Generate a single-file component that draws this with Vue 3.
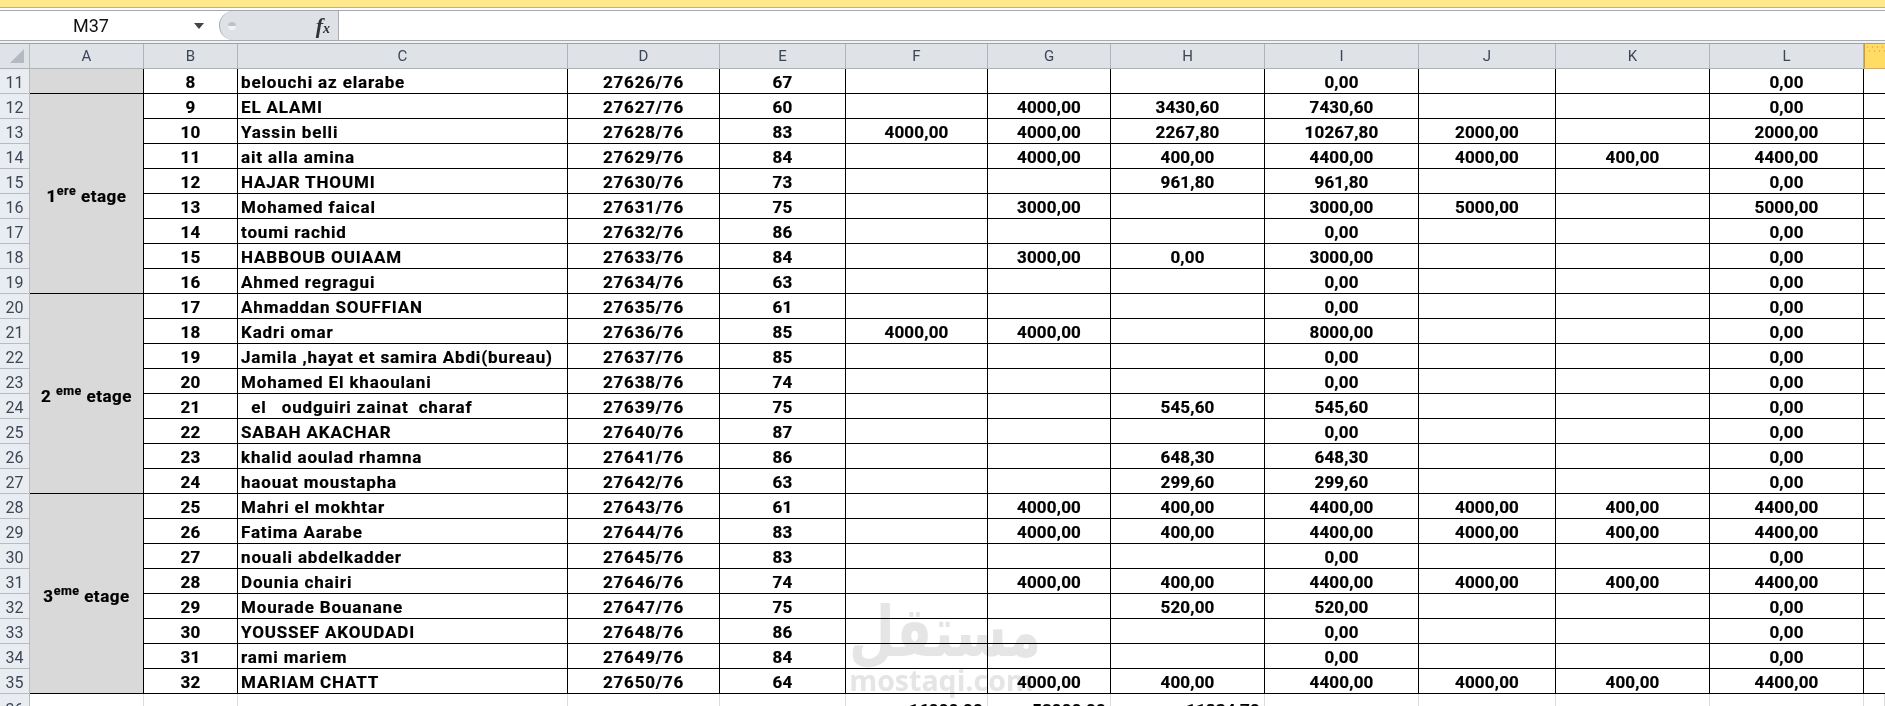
<script setup>
const columns = ['A','B','C','D','E','F','G','H','I','J','K','L']
const widths = [30,114,94,330,152,126,142,123,154,154,137,154,154,21]
const full = ['', '4000,00','400,00','4400,00','4000,00','400,00','4400,00']
const rows = [
  [8,'belouchi az elarabe','27626/76','67','','','','0,00','','','0,00'],
  [9,'EL ALAMI','27627/76','60','','4000,00','3430,60','7430,60','','','0,00'],
  [10,'Yassin belli','27628/76','83','4000,00','4000,00','2267,80','10267,80','2000,00','','2000,00'],
  [11,'ait alla amina','27629/76','84',...full],
  [12,'HAJAR THOUMI','27630/76','73','','','961,80','961,80','','','0,00'],
  [13,'Mohamed faical','27631/76','75','','3000,00','','3000,00','5000,00','','5000,00'],
  [14,'toumi rachid','27632/76','86','','','','0,00','','','0,00'],
  [15,'HABBOUB OUIAAM','27633/76','84','','3000,00','0,00','3000,00','','','0,00'],
  [16,'Ahmed regragui','27634/76','63','','','','0,00','','','0,00'],
  [17,'Ahmaddan SOUFFIAN','27635/76','61','','','','0,00','','','0,00'],
  [18,'Kadri omar','27636/76','85','4000,00','4000,00','','8000,00','','','0,00'],
  [19,'Jamila ,hayat et samira Abdi(bureau)','27637/76','85','','','','0,00','','','0,00'],
  [20,'Mohamed El khaoulani','27638/76','74','','','','0,00','','','0,00'],
  [21,'  el   oudguiri zainat  charaf','27639/76','75','','','545,60','545,60','','','0,00'],
  [22,'SABAH AKACHAR','27640/76','87','','','','0,00','','','0,00'],
  [23,'khalid aoulad rhamna','27641/76','86','','','648,30','648,30','','','0,00'],
  [24,'haouat moustapha','27642/76','63','','','299,60','299,60','','','0,00'],
  [25,'Mahri el mokhtar','27643/76','61',...full],
  [26,'Fatima Aarabe','27644/76','83',...full],
  [27,'nouali abdelkadder','27645/76','83','','','','0,00','','','0,00'],
  [28,'Dounia chairi','27646/76','74',...full],
  [29,'Mourade Bouanane','27647/76','75','','','520,00','520,00','','','0,00'],
  [30,'YOUSSEF AKOUDADI','27648/76','86','','','','0,00','','','0,00'],
  [31,'rami mariem','27649/76','84','','','','0,00','','','0,00'],
  [32,'MARIAM CHATT','27650/76','64',...full],
].map((cells, i) => ({ label: i + 11, cells }))
const groups = {
  11: { span: 1, num: '', sup: '', after: '' },
  12: { span: 8, num: '1', sup: 'ere', after: ' etage' },
  20: { span: 8, num: '2 ', sup: 'eme', after: ' etage' },
  28: { span: 8, num: '3', sup: 'eme', after: ' etage' },
}
const totals = { F: '16000,00', G: '52000,00', H: '11834,70' }
</script>

<template>
  <div class="sheet">
    <div class="ribbon-edge"></div>
    <div class="formula-bar">
      <div class="name-box">
        <span class="cell-ref">M37</span>
        <svg class="caret" width="10" height="6" viewBox="0 0 10 6"><path d="M0 0h10L5 6z" fill="#444"/></svg>
      </div>
      <div class="fx-zone">
        <span class="dot"></span>
        <span class="fx">f<i>x</i></span>
      </div>
      <div class="formula-input"></div>
    </div>
    <div class="formula-gap"></div>
    <div class="grid-wrap">
      <table class="grid">
        <colgroup>
          <col v-for="(w, i) in widths" :key="i" :style="{ width: w + 'px' }" />
        </colgroup>
        <thead>
          <tr>
            <th class="corner"><span class="corner-mark"></span></th>
            <th v-for="c in columns" :key="c" class="col-head">{{ c }}</th>
            <th class="col-head selected"></th>
          </tr>
        </thead>
        <tbody>
          <tr v-for="row in rows" :key="row.label">
            <th class="row-head">{{ row.label }}</th>
            <td v-if="groups[row.label]" :rowspan="groups[row.label].span" class="floor">
              <template v-if="groups[row.label].num">{{ groups[row.label].num }}<sup>{{ groups[row.label].sup }}</sup>{{ groups[row.label].after }}</template>
            </td>
            <td class="cell center">{{ row.cells[0] }}</td>
            <td class="cell name">{{ row.cells[1] }}</td>
            <td class="cell center code">{{ row.cells[2] }}</td>
            <td v-for="n in 8" :key="n" class="cell center">{{ row.cells[n + 2] }}</td>
            <td class="cell open"></td>
          </tr>
          <tr class="tail">
            <th class="row-head">36</th>
            <td class="plain"></td>
            <td class="plain"></td>
            <td class="plain"></td>
            <td class="plain"></td>
            <td class="plain"></td>
            <td class="plain total">{{ totals.F }}</td>
            <td class="plain total">{{ totals.G }}</td>
            <td class="plain total">{{ totals.H }}</td>
            <td class="plain"></td>
            <td class="plain"></td>
            <td class="plain"></td>
            <td class="plain"></td>
            <td class="plain"></td>
          </tr>
        </tbody>
      </table>
      <div class="watermark">
        <div class="wm-ar">مستقل</div>
        <div class="wm-en">mostaqi.com</div>
      </div>
    </div>
  </div>
</template>

<style>
html, body { margin: 0; overflow: hidden; background: #fff; }
</style>

<style scoped>
.sheet {
  width: 1885px;
  height: 706px;
  overflow: hidden;
  background: #fff;
  font-family: Roboto, "Liberation Sans", sans-serif;
}
.ribbon-edge {
  height: 7px;
  background: #ffe98c;
  border-bottom: 1px solid #c9b169;
}
.formula-bar {
  display: flex;
  margin-top: 2px;
  border-top: 1px solid #a5a8ac;
  border-bottom: 1px solid #a7aaae;
  height: 29px;
}
.name-box {
  width: 219px;
  flex: none;
  display: flex;
  align-items: center;
}
.cell-ref {
  margin-left: 73px;
  font-size: 18px;
  color: #111;
}
.caret {
  margin-left: 85px;
}
.fx-zone {
  width: 120px;
  flex: none;
  box-sizing: border-box;
  background: #dee1e6;
  border-left: 1px solid #a9acb1;
  border-right: 1px solid #a9acb1;
  border-radius: 15px 0 0 15px;
  display: flex;
  align-items: center;
  justify-content: space-between;
  padding: 0 8px 0 8px;
}
.dot {
  width: 8px;
  height: 8px;
  border-radius: 50%;
  background: linear-gradient(#bfc2c7 50%, #f2f3f5 50%);
}
.fx {
  font-family: "Liberation Serif", serif;
  font-style: italic;
  font-weight: 700;
  font-size: 22px;
  color: #333;
  line-height: 1;
}
.fx i {
  font-size: 14px;
}
.formula-input {
  flex: 1;
  background: #fff;
}
.formula-gap {
  height: 2px;
  background: #f1f1f1;
  border-bottom: 1px solid #9ea1a6;
}
.grid-wrap {
  position: relative;
}
.grid {
  table-layout: fixed;
  width: 1885px;
  border-collapse: separate;
  border-spacing: 0;
}
th, td {
  padding: 0;
  height: 25px;
  box-sizing: border-box;
  overflow: hidden;
}
.corner {
  background: #dfe2e7;
  border-right: 1px solid #b7bbc1;
  border-bottom: 1px solid #aeb1b5;
  position: relative;
}
.corner-mark {
  position: absolute;
  right: 5px;
  bottom: 5px;
  width: 0;
  height: 0;
  border-left: 14px solid transparent;
  border-bottom: 14px solid #b5b9c3;
}
.col-head {
  background: #dfe2e7;
  border-right: 1px solid #b0b4ba;
  border-bottom: 1px solid #aeb1b5;
  font-weight: 400;
  font-size: 15px;
  color: #3b4656;
  text-align: center;
}
.selected {
  background:
    radial-gradient(#f3b25a 1px, transparent 1.2px) 0 1px / 5px 4px repeat-x,
    radial-gradient(#f3b25a 1px, transparent 1.2px) 2px 5px / 5px 4px repeat-x,
    #ffdc63;
  border-left: 1px solid #c79a4e;
  border-right: 0;
  border-bottom: 1px solid #f0a63a;
}
.row-head {
  background: #e9ecf0;
  border-right: 1px solid #b7bbc1;
  border-bottom: 1px solid #b7bcc2;
  font-weight: 400;
  font-size: 16px;
  color: #3b4656;
  text-align: center;
  padding-top: 2px;
}
.floor {
  background: #d9d9d9;
  border-right: 1px solid #000;
  border-bottom: 1px solid #000;
  text-align: center;
  font-weight: 700;
  font-size: 17px;
  letter-spacing: 0.5px;
  color: #000;
  white-space: pre;
  padding-top: 4px;
  -webkit-text-stroke: 0.2px #000;
}
.floor sup {
  font-size: 12.5px;
  line-height: 0;
  vertical-align: 7px;
}
.cell {
  border-right: 1px solid #000;
  border-bottom: 1px solid #000;
  font-weight: 700;
  font-size: 17px;
  letter-spacing: 0.2px;
  color: #000;
  white-space: pre;
  padding-top: 1px;
  -webkit-text-stroke: 0.2px #000;
}
.center {
  text-align: center;
}
.code {
  letter-spacing: 0.8px;
}
.name {
  text-align: left;
  padding-left: 3px;
  letter-spacing: 0.85px;
}
.open {
  border-right: 0;
}
.plain {
  border-right: 1px solid #dcdcdc;
  font-weight: 700;
  font-size: 17px;
  letter-spacing: 0.2px;
  color: #000;
  vertical-align: bottom;
  text-align: right;
  padding-right: 4px;
  line-height: 20px;
  -webkit-text-stroke: 0.2px #000;
}
.tail .row-head {
  vertical-align: top;
  padding-top: 6px;
}
.watermark {
  position: absolute;
  left: 849px;
  top: 553px;
  width: 185px;
  text-align: center;
  color: #e5e5e5;
  mix-blend-mode: multiply;
  pointer-events: none;
}
.wm-ar {
  width: max-content;
  font-family: "DejaVu Sans", sans-serif;
  font-weight: 700;
  font-size: 70px;
  line-height: 70px;
  transform: scaleX(0.75);
  transform-origin: left center;
}
.wm-en {
  font-family: "Open Sans", sans-serif;
  font-weight: 700;
  font-size: 28.5px;
  line-height: 26px;
}
</style>
